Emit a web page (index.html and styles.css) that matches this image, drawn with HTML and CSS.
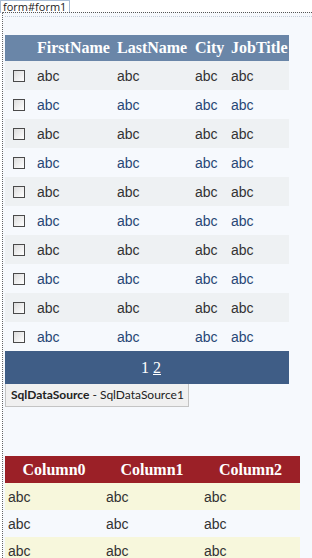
FILE: index.html
```html
<!DOCTYPE html>
<html lang="en">
<head>
    <meta charset="UTF-8">
    <meta name="viewport" content="width=device-width, initial-scale=1.0">
    <title>Default.aspx [Design]</title>
    <link rel="stylesheet" href="styles.css">
</head>
<body>
    <!-- Designer tag for the form -->
    <div class="tag">form#form1</div>

    <div class="surface">
        <div class="inner">

            <!-- GridView1 -->
            <table class="grid">
                <colgroup>
                    <col class="c-check">
                    <col class="c-first">
                    <col class="c-last">
                    <col class="c-city">
                    <col class="c-job">
                </colgroup>
                <thead>
                    <tr>
                        <th></th>
                        <th>FirstName</th>
                        <th>LastName</th>
                        <th>City</th>
                        <th>JobTitle</th>
                    </tr>
                </thead>
                <tbody>
                    <tr class="row"><td><span class="check"></span></td><td>abc</td><td>abc</td><td>abc</td><td>abc</td></tr>
                    <tr class="alt"><td><span class="check"></span></td><td>abc</td><td>abc</td><td>abc</td><td>abc</td></tr>
                    <tr class="row"><td><span class="check"></span></td><td>abc</td><td>abc</td><td>abc</td><td>abc</td></tr>
                    <tr class="alt"><td><span class="check"></span></td><td>abc</td><td>abc</td><td>abc</td><td>abc</td></tr>
                    <tr class="row"><td><span class="check"></span></td><td>abc</td><td>abc</td><td>abc</td><td>abc</td></tr>
                    <tr class="alt"><td><span class="check"></span></td><td>abc</td><td>abc</td><td>abc</td><td>abc</td></tr>
                    <tr class="row"><td><span class="check"></span></td><td>abc</td><td>abc</td><td>abc</td><td>abc</td></tr>
                    <tr class="alt"><td><span class="check"></span></td><td>abc</td><td>abc</td><td>abc</td><td>abc</td></tr>
                    <tr class="row"><td><span class="check"></span></td><td>abc</td><td>abc</td><td>abc</td><td>abc</td></tr>
                    <tr class="alt"><td><span class="check"></span></td><td>abc</td><td>abc</td><td>abc</td><td>abc</td></tr>
                </tbody>
                <tfoot>
                    <tr>
                        <td colspan="5" class="pager"><span>1</span> <a href="#">2</a></td>
                    </tr>
                </tfoot>
            </table>

            <!-- Data source control -->
            <div class="datasource"><strong>SqlDataSource</strong> - SqlDataSource1</div>

            <!-- GridView2 -->
            <table class="grid2">
                <colgroup>
                    <col class="c-col0">
                    <col class="c-col1">
                    <col class="c-col2">
                </colgroup>
                <thead>
                    <tr>
                        <th>Column0</th>
                        <th>Column1</th>
                        <th>Column2</th>
                    </tr>
                </thead>
                <tbody>
                    <tr class="row"><td>abc</td><td>abc</td><td>abc</td></tr>
                    <tr class="alt"><td>abc</td><td>abc</td><td>abc</td></tr>
                    <tr class="row"><td>abc</td><td>abc</td><td>abc</td></tr>
                </tbody>
            </table>

        </div>
    </div>
</body>
</html>
```

FILE: styles.css
```css
/* Reset */
* {
    margin: 0;
    padding: 0;
    box-sizing: border-box;
}

body {
    background-color: #fff;
    font-family: "Liberation Sans", Arial, sans-serif;
    overflow: hidden;
}

/* Designer tag */
.tag {
    width: fit-content;
    height: 13px;
    padding: 0 3px 0 2px;
    border: 1px solid #a9bdd6;
    border-bottom: none;
    font-family: "Open Sans", sans-serif;
    font-size: 11px;
    line-height: 11px;
    color: #222;
}

/* Design surface */
.surface {
    margin-left: 2px;
    margin-top: -1px;
    min-height: 560px;
    background-color: #f6f9fd;
    border-top: 1px dotted #555;
    border-left: 1px dotted #666;
    padding-top: 3px;
}

.inner {
    margin-left: 2px;
    border-top: 1px dotted #c3cdd9;
    padding-top: 18px;
}

/* GridView1 */
.grid {
    border-collapse: collapse;
    width: 284px;
    table-layout: fixed;
}

.c-check { width: 28px; }
.c-first { width: 80px; }
.c-last { width: 78px; }
.c-city { width: 36px; }
.c-job { width: 62px; }

.grid th {
    height: 26px;
    background-color: #6a86a8;
    color: #fff;
    font-family: "Liberation Serif", "Times New Roman", serif;
    font-size: 16px;
    font-weight: bold;
    text-align: left;
    padding: 0 4px;
    white-space: nowrap;
}

.grid td {
    height: 29px;
    padding: 0 4px;
    font-size: 14px;
    vertical-align: middle;
}

.grid td:first-child {
    padding-left: 8px;
}

.grid .row {
    background-color: #eef1f3;
    color: #333;
}

.grid .alt {
    background-color: #f6f9fd;
    color: #284775;
}

.check {
    display: block;
    width: 12px;
    height: 12px;
    border: 1px solid #4a4a4a;
    background: linear-gradient(135deg, #dcdcdc, #fff);
}

.grid .pager {
    height: 33px;
    padding: 0;
    background-color: #3f5d86;
    color: #fff;
    text-align: center;
    font-family: "Liberation Serif", "Times New Roman", serif;
    font-size: 16px;
}

.pager a {
    color: #fff;
}

/* SqlDataSource control */
.datasource {
    width: 184px;
    height: 23px;
    padding: 3px 0 0 5px;
    background-color: #f0f0f0;
    border: 1px solid #c4c4c4;
    border-top: none;
    font-family: Lato, "Open Sans", sans-serif;
    font-size: 12px;
    color: #222;
    white-space: nowrap;
}

/* GridView2 */
.grid2 {
    border-collapse: collapse;
    table-layout: fixed;
    width: 295px;
    margin-top: 49px;
}

.c-col0 { width: 98px; }
.c-col1 { width: 98px; }
.c-col2 { width: 99px; }

.grid2 th {
    height: 27px;
    background-color: #9b2027;
    color: #fff;
    font-family: "Liberation Serif", "Times New Roman", serif;
    font-size: 16px;
    font-weight: bold;
    text-align: center;
}

.grid2 td {
    height: 27px;
    padding: 0 3px;
    font-size: 14px;
    color: #333;
}

.grid2 .row {
    background-color: #f7f7dc;
}

.grid2 .alt {
    background-color: #f6f9fd;
}
```
